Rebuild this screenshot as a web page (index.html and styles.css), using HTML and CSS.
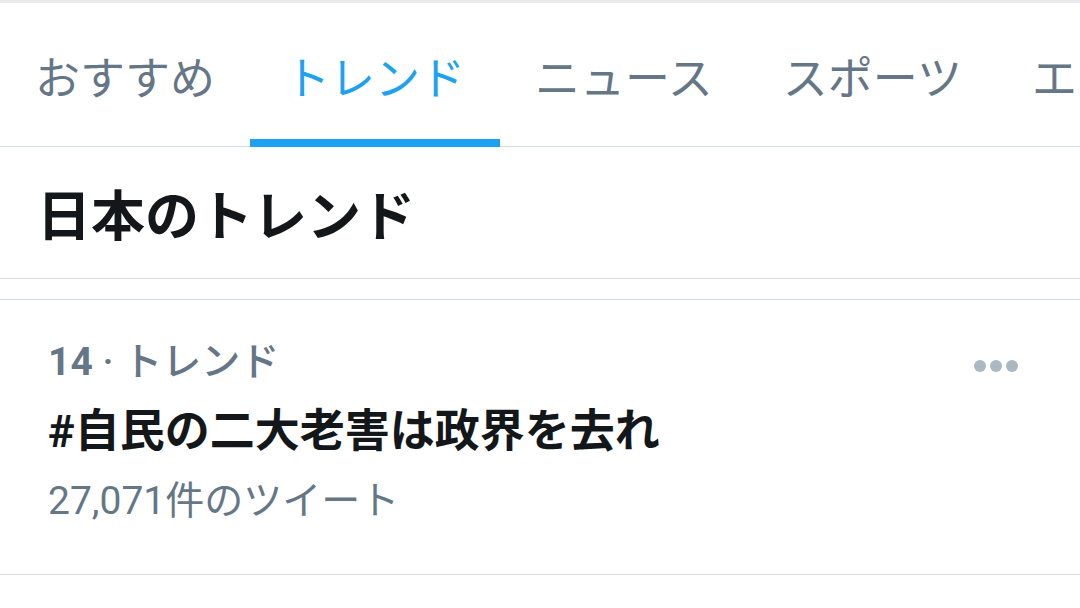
FILE: index.html
```html
<!DOCTYPE html>
<html lang="ja">
<head>
  <meta charset="UTF-8">
  <meta name="viewport" content="width=device-width, initial-scale=1.0">
  <title>トレンド</title>
  <link rel="stylesheet" href="styles.css">
</head>
<body>
  <div class="status-strip"></div>

  <nav class="tabs">
    <div class="tab">おすすめ</div>
    <div class="tab active">トレンド</div>
    <div class="tab">ニュース</div>
    <div class="tab">スポーツ</div>
    <div class="tab">エンタメ</div>
  </nav>

  <h2 class="section-title">日本のトレンド</h2>
  <div class="spacer"></div>

  <div class="trend">
    <div class="trend-body">
      <div class="trend-meta"><span class="rank">14</span> · トレンド</div>
      <div class="trend-name">#自民の二大老害は政界を去れ</div>
      <div class="trend-count">27,071件のツイート</div>
    </div>
    <button class="more" aria-label="その他">
      <span></span><span></span><span></span>
    </button>
  </div>
</body>
</html>
```

FILE: styles.css
```css
:root {
  --blue: #1da1f2;
  --gray: #657786;
  --text: #14171a;
  --line: #d6dbdf;
}
body {
  margin: 0;
  background: white;
  font-family: Roboto, "Noto Sans CJK JP", sans-serif;
  color: var(--text);
  overflow: hidden;
}
.status-strip {
  height: 3px;
  background: #e8eaeb;
}
.tabs {
  display: flex;
  height: 143px;
  border-bottom: 1px solid var(--line);
  white-space: nowrap;
}
.tab {
  display: flex;
  align-items: center;
  padding: 0 35px;
  padding-top: 8px;
  font-size: 45px;
  color: var(--gray);
  border-bottom: 8px solid transparent;
  margin-bottom: -1px;
}
.tab.active {
  color: var(--blue);
  border-bottom-color: var(--blue);
}
.section-title {
  margin: 0;
  height: 131px;
  display: flex;
  align-items: center;
  padding-left: 37px;
  font-size: 54px;
  font-weight: 700;
  border-bottom: 1px solid var(--line);
}
.spacer {
  height: 20px;
  border-bottom: 1px solid var(--line);
}
.trend {
  display: flex;
  align-items: flex-start;
  padding: 37px 62px 39px 48px;
  border-bottom: 1px solid var(--line);
}
.trend-body {
  flex: 1;
}
.trend-meta {
  font-size: 39px;
  line-height: 50px;
  font-weight: 500;
  color: var(--gray);
}
.rank {
  font-weight: 700;
}
.trend-name {
  margin-top: 10px;
  font-size: 45px;
  line-height: 70px;
  font-weight: 700;
}
.trend-count {
  font-size: 39px;
  line-height: 68px;
  color: var(--gray);
}
.more {
  display: flex;
  gap: 4px;
  margin-top: 23px;
  padding: 0;
  border: none;
  background: none;
}
.more span {
  width: 12px;
  height: 12px;
  border-radius: 50%;
  background: #aab8c2;
}
```
